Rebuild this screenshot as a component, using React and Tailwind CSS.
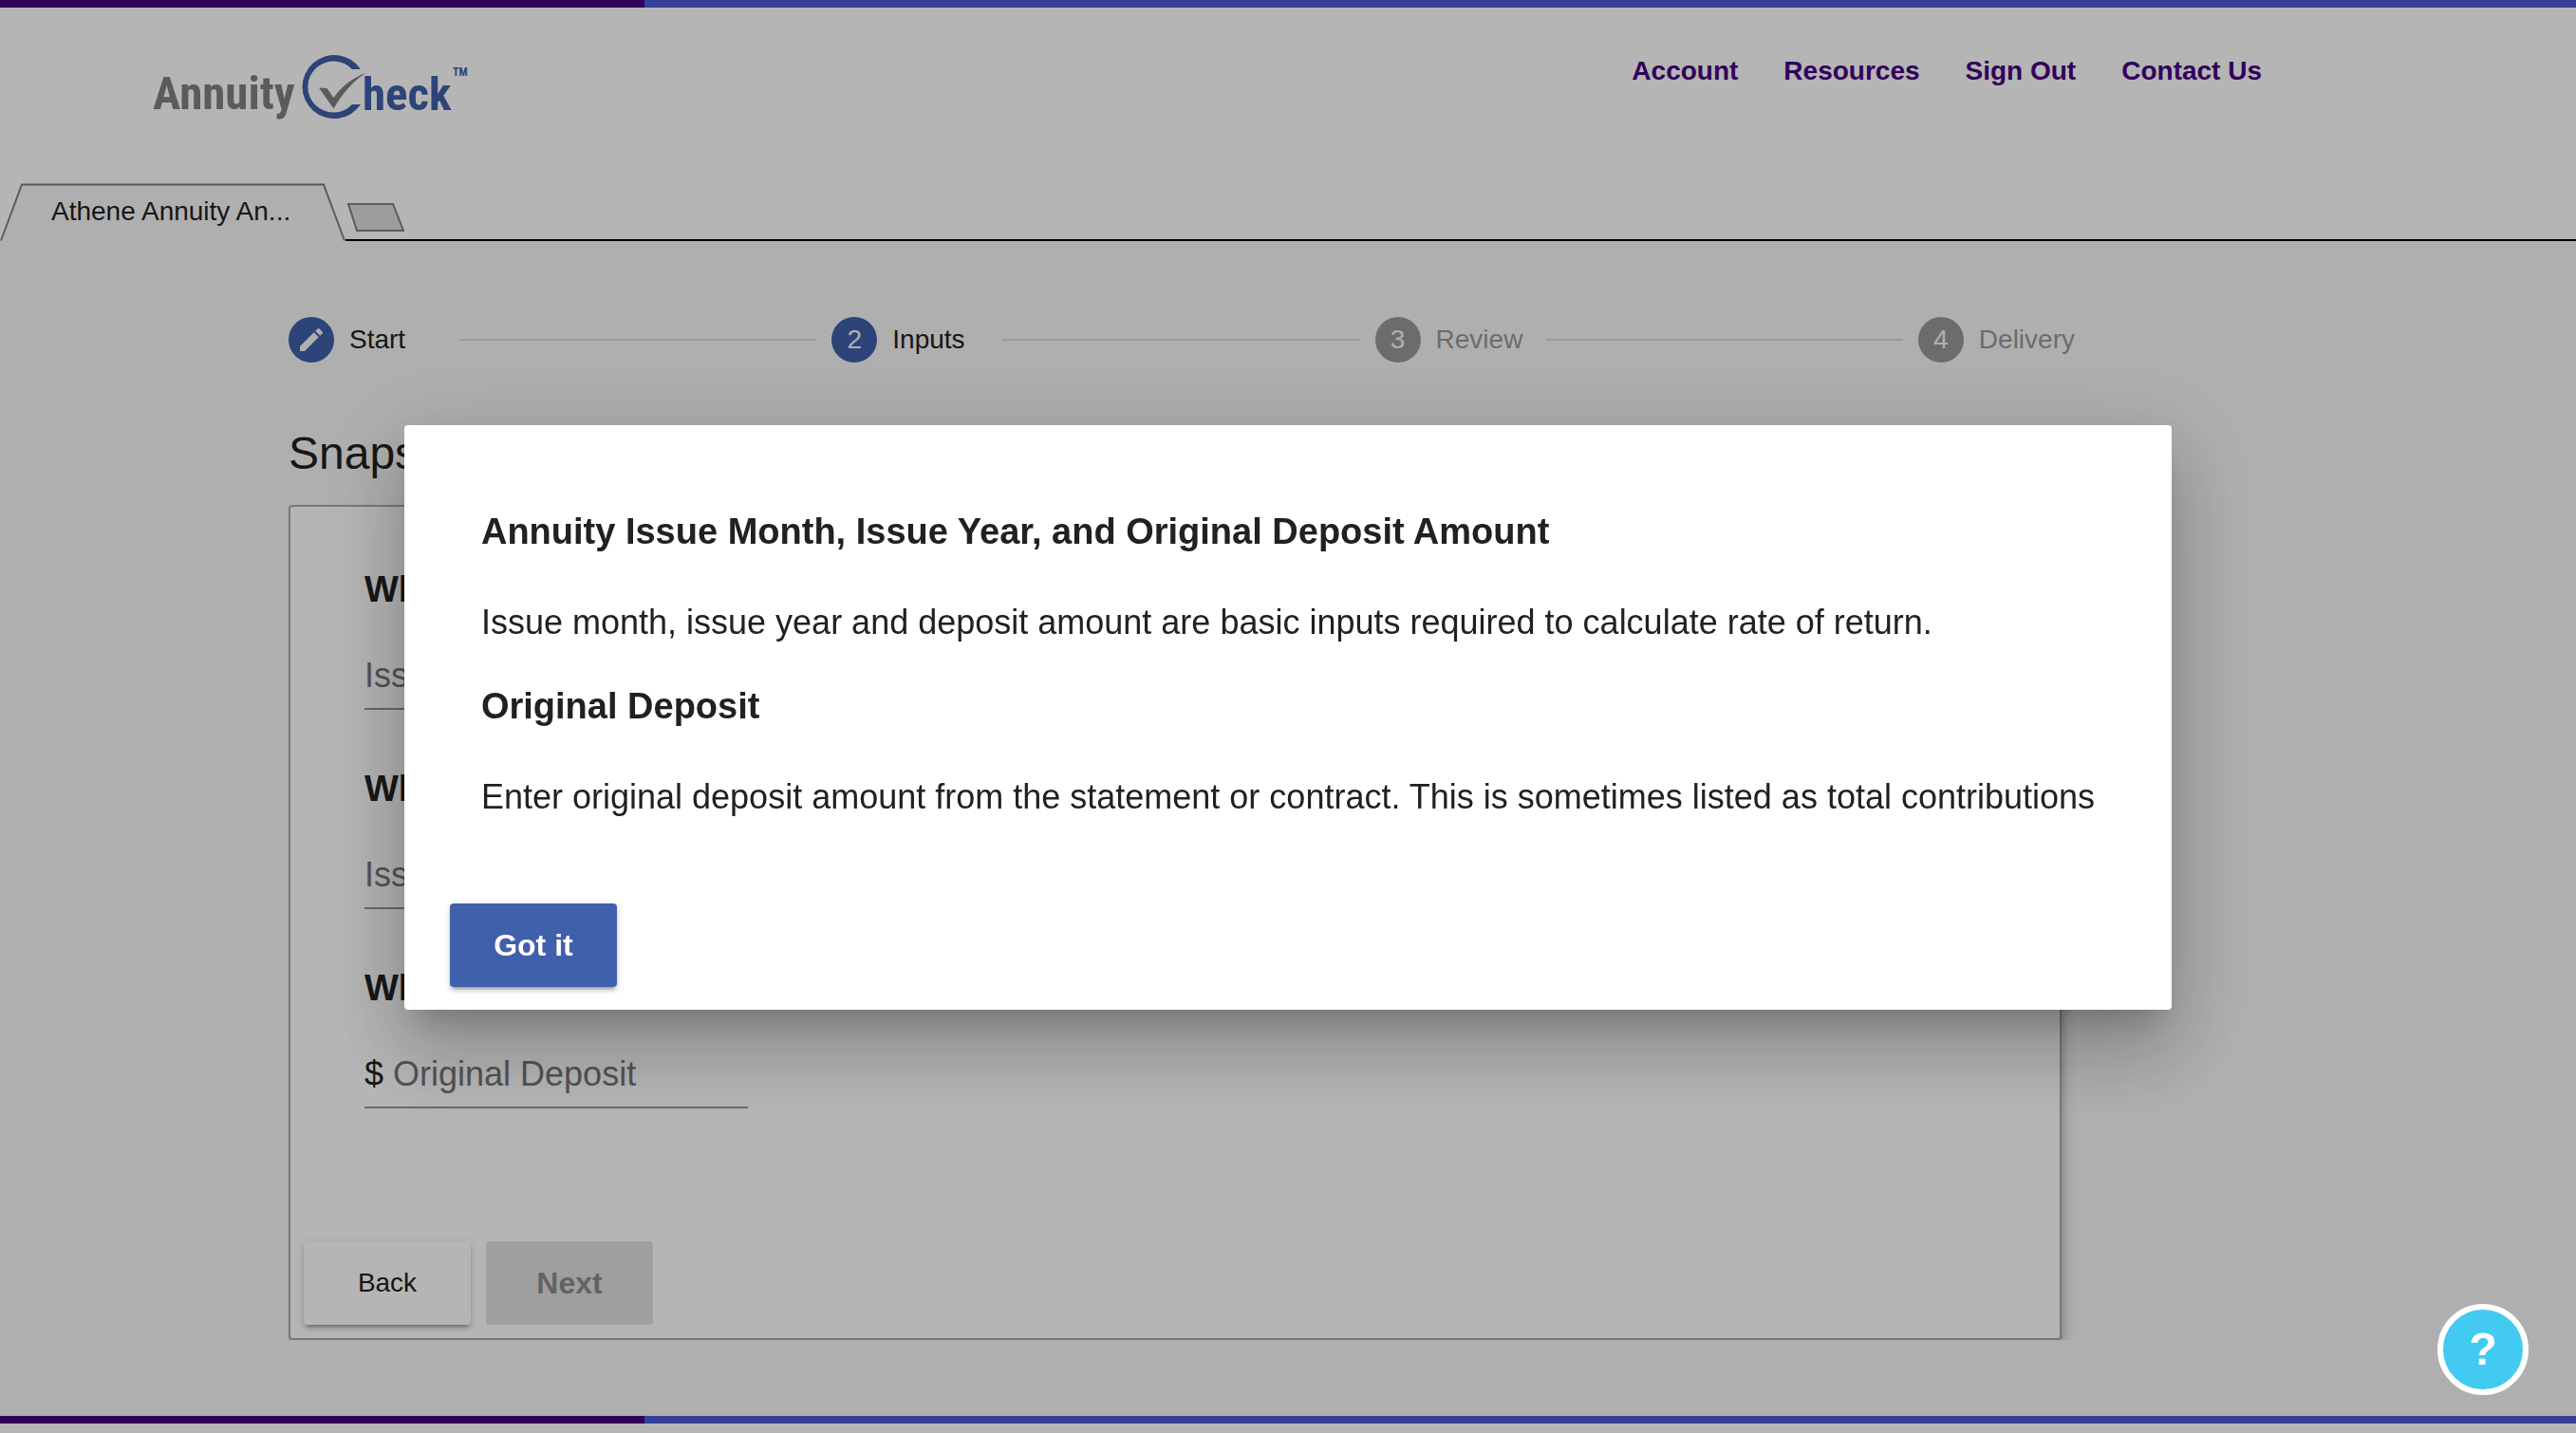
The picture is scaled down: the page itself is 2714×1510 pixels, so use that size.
import React from "react";

function Stripe() {
  return (
    <div className="flex h-2 w-full shrink-0">
      <div className="w-1/4 bg-[#470080]" />
      <div className="flex-1 bg-[#4c5bd8]" />
    </div>
  );
}

function Logo() {
  return (
    <svg width="334" height="74" viewBox="0 0 334 74" role="img" aria-label="AnnuityCheck">
      <g fontFamily="'Roboto Condensed', 'Liberation Sans Narrow', 'Liberation Sans', sans-serif" fontWeight="700">
        <text x="1" y="59" fontSize="49" fill="#818184">Annuity</text>
        <text x="222" y="60" fontSize="49" fill="#4060ab">heck</text>
        <text x="317" y="24" fontSize="12" fill="#4060ab">TM</text>
      </g>
      <path
        d="M220 17A33.5 33.5 0 1 0 220 54H211A27 27 0 1 1 211 17Z"
        fill="#4060ab"
      />
      <path
        d="M176 36.500L184.500 37L191.500 47C199 36 211 26 225 21C212 30 201 42 191.500 58.500Z"
        fill="#818184"
      />
    </svg>
  );
}

const navItems = ["Account", "Resources", "Sign Out", "Contact Us"];

function Header() {
  return (
    <header className="flex h-[178px] items-start justify-between pr-[331px] pl-40">
      <a href="#home" className="pt-12">
        <Logo />
      </a>
      <nav className="flex gap-12 pt-[51px] text-[28px] leading-8 font-bold text-[#470080]">
        {navItems.map((item) => (
          <a key={item} href="#nav">
            {item}
          </a>
        ))}
      </nav>
    </header>
  );
}

function TabStrip() {
  return (
    <div className="flex h-[68px] items-end">
      <button type="button" className="relative h-[62px] w-[364px] shrink-0">
        <svg className="absolute inset-0" width="364" height="62" viewBox="0 0 364 62" aria-hidden="true">
          <path d="M1 61.500L23 2.500H341L363 61.500" fill="#f7f7f7" stroke="#808080" strokeWidth="2" />
        </svg>
        <span className="relative flex h-full items-center pl-[54px] text-[28px] leading-8 text-[#212121]">
          Athene Annuity An...
        </span>
      </button>
      <div className="flex h-full flex-1 items-end border-b-2 border-black pb-[7px]">
        <button type="button" aria-label="New tab">
          <svg className="block" width="64" height="32" viewBox="0 0 64 32" aria-hidden="true">
            <path d="M3 2H50L61 30H12Z" fill="#dedede" stroke="#808080" strokeWidth="2" />
          </svg>
        </button>
      </div>
    </div>
  );
}

const steps = [
  { id: 1, label: "Start", active: true, edit: true },
  { id: 2, label: "Inputs", active: true },
  { id: 3, label: "Review" },
  { id: 4, label: "Delivery" },
];

function Stepper() {
  return (
    <ol className="flex items-center gap-4 pr-0.5 text-[28px] leading-8">
      {steps.map((step, i) => (
        <React.Fragment key={step.id}>
          {i > 0 && <li aria-hidden="true" className="h-0.5 flex-1 bg-[#dadada]" />}
          <li className="flex items-center gap-4">
            <span
              className={
                step.active
                  ? "flex size-12 items-center justify-center rounded-full bg-[#4060ab] text-[#f7f7f7]"
                  : "flex size-12 items-center justify-center rounded-full bg-[#999999] text-[#f7f7f7]"
              }
            >
              {step.edit ? (
                <svg width="32" height="32" viewBox="0 0 24 24" fill="currentColor" aria-hidden="true">
                  <path d="M3 17.250V21h3.750L17.810 9.940l-3.750-3.750L3 17.250zM20.710 7.040a1 1 0 0 0 0-1.410l-2.340-2.340a1 1 0 0 0-1.410 0l-1.830 1.830 3.750 3.750 1.830-1.830z" />
                </svg>
              ) : (
                step.id
              )}
            </span>
            <span className={step.active ? "min-w-[100px] text-[#212121]" : "min-w-[100px] text-[#999999]"}>
              {step.label}
            </span>
          </li>
        </React.Fragment>
      ))}
    </ol>
  );
}

const fields = [
  { id: "month", question: "What month was it issued?", placeholder: "Issue Month" },
  { id: "year", question: "What year was it issued?", placeholder: "Issue Year" },
  { id: "deposit", question: "What was the original deposit?", placeholder: "Original Deposit", prefix: "$" },
];

function SnapshotForm() {
  return (
    <div className="overflow-hidden pr-4">
      <form className="rounded-sm border-2 border-[#a9a9a9] bg-white pt-[62px] shadow-[0_4px_8px_rgba(0,0,0,0.2),0_8px_20px_rgba(0,0,0,0.19)]">
        <div className="pl-[78px]">
          {fields.map((f) => (
            <div key={f.id} className="h-[210px]">
              <label htmlFor={f.id} className="block text-[38px] leading-[50px] font-bold text-[#212121]">
                {f.question}
              </label>
              <div className="mt-[42px] flex h-[60px] w-[404px] items-start gap-2.5 border-b-2 border-[#949494] text-4xl leading-[48px] text-[#212121]">
                {f.prefix && <span>{f.prefix}</span>}
                <input
                  id={f.id}
                  type="text"
                  placeholder={f.placeholder}
                  className="h-12 min-w-0 flex-1 bg-transparent outline-none placeholder:text-[#757575]"
                />
              </div>
            </div>
          ))}
        </div>
        <div className="mt-[82px] flex gap-4 p-3.5 pt-0">
          <button
            type="button"
            className="h-[88px] w-44 rounded bg-white text-[28px] text-[#212121] shadow-[0_6px_2px_-4px_rgba(0,0,0,0.2),0_4px_4px_0_rgba(0,0,0,0.14),0_2px_10px_0_rgba(0,0,0,0.12)]"
          >
            Back
          </button>
          <button type="button" disabled className="h-[88px] w-44 rounded bg-[#e0e0e0] text-[32px] font-bold text-[#8c8c8c]">
            Next
          </button>
        </div>
      </form>
    </div>
  );
}

function HelpDialog() {
  return (
    <div className="fixed inset-0 flex items-center justify-center bg-black/29 pt-0.5">
      <div
        role="dialog"
        aria-modal="true"
        aria-labelledby="help-title"
        className="rounded bg-white pt-[88px] pb-6 text-[#212121] shadow-[0_22px_30px_-14px_rgba(0,0,0,0.2),0_48px_76px_6px_rgba(0,0,0,0.14),0_18px_92px_16px_rgba(0,0,0,0.12)]"
      >
        <div className="px-[81px] text-4xl leading-[48px]">
          <h2 id="help-title" className="text-[38px] leading-[48px] font-bold">
            Annuity Issue Month, Issue Year, and Original Deposit Amount
          </h2>
          <p className="mt-12">
            Issue month, issue year and deposit amount are basic inputs required to calculate rate of return.
          </p>
          <h2 className="mt-10 text-[38px] leading-[48px] font-bold">Original Deposit</h2>
          <p className="mt-12">
            Enter original deposit amount from the statement or contract. This is sometimes listed as total contributions
          </p>
        </div>
        <div className="mt-[88px] flex px-12">
          <button
            type="button"
            className="h-[88px] w-44 rounded bg-[#4060ab] text-[32px] font-bold text-white shadow-[0_6px_2px_-4px_rgba(0,0,0,0.2),0_4px_4px_0_rgba(0,0,0,0.14),0_2px_10px_0_rgba(0,0,0,0.12)]"
          >
            Got it
          </button>
        </div>
      </div>
    </div>
  );
}

export default function App() {
  return (
    <div className="flex min-h-screen flex-col bg-white font-['Liberation_Sans',Arial,sans-serif]">
      <Stripe />
      <Header />
      <TabStrip />
      <main className="flex-1 bg-[#f7f7f7] pt-20 pr-[526px] pl-[304px]">
        <Stepper />
        <h1 className="mt-[68px] mb-[26px] text-5xl leading-[56px] text-[#212121]">Snapshot</h1>
        <SnapshotForm />
      </main>
      <Stripe />
      <div className="h-2.5 bg-white" />
      <HelpDialog />
      <button
        type="button"
        aria-label="Help"
        className="fixed right-[50px] bottom-10 size-24 rounded-full border-6 border-white bg-[#43caf1] text-5xl font-bold text-white"
      >
        ?
      </button>
    </div>
  );
}
